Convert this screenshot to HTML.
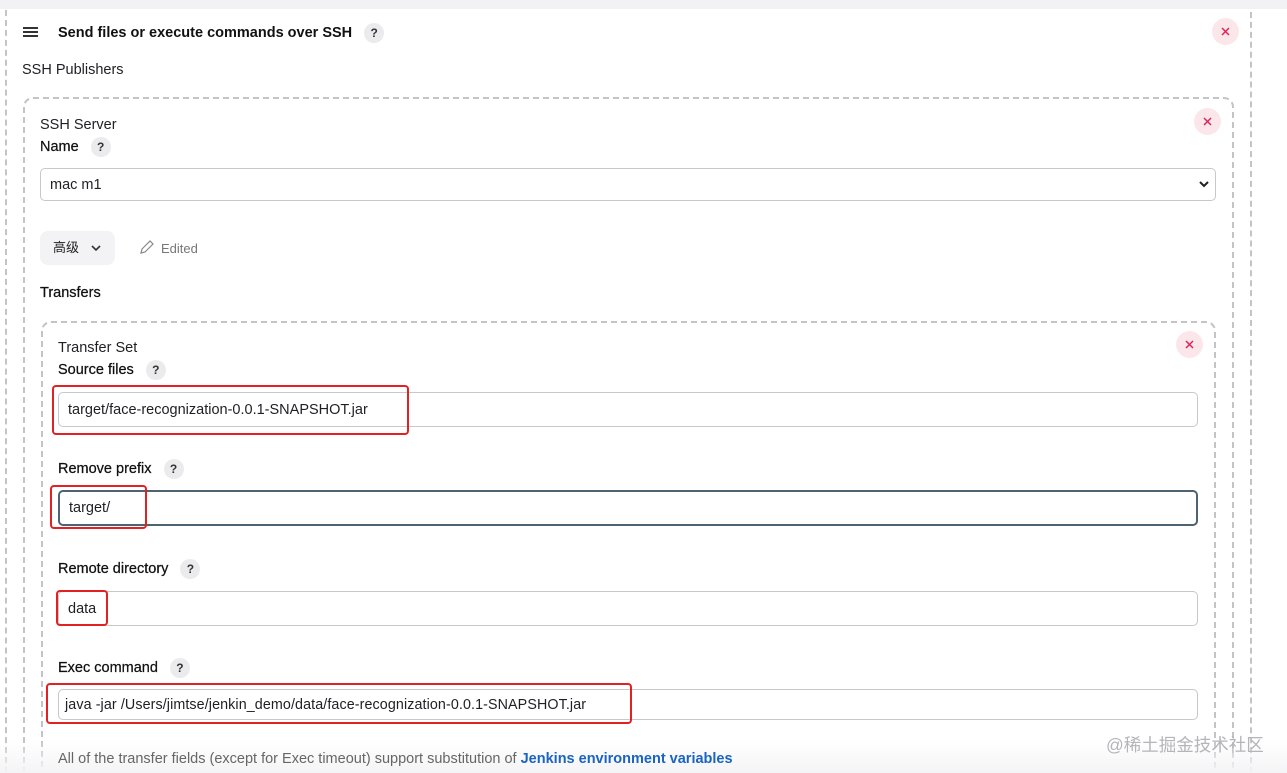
<!DOCTYPE html>
<html><head><meta charset="utf-8"><style>
*{box-sizing:border-box;margin:0;padding:0}
html,body{width:1287px;height:773px;overflow:hidden}
body{background:#fff;font-family:"Liberation Sans","Noto Sans CJK SC",sans-serif;color:#1f1f24}
#w{position:relative;width:1287px;height:773px;overflow:hidden}
.a{position:absolute}
.dash{position:absolute;border:2px dashed #c4c4c8;border-bottom:none;border-radius:10px 10px 0 0}
.lbl{position:absolute;font-size:14.5px;font-weight:normal;color:#111;-webkit-text-stroke:0.25px #111}
.t{position:absolute;font-size:14.5px;color:#1f1f24}
.q{display:inline-block;width:20px;height:20px;border-radius:50%;background:#ebebee;text-align:center;line-height:20px;font-size:12px;font-weight:700;margin-left:8px;color:#333;vertical-align:middle;-webkit-text-stroke:0}
.inp{position:absolute;border:1.5px solid #c8c8cc;border-radius:5px;background:#fff;font-size:14.5px;padding-left:9px;display:flex;align-items:center}
.red{position:absolute;border:2px solid #e22222;border-radius:4px}
.x{position:absolute;width:27px;height:27px;border-radius:50%;background:#fbe7ea}
.x svg{position:absolute;left:9px;top:9px}
</style></head><body><div id="w">
<div class="a" style="left:0;top:0;width:1287px;height:9px;background:#f2f2f5"></div>
<div class="a" style="left:5px;top:10px;width:0;height:763px;border-left:2px dashed #c4c4c8"></div>
<div class="a" style="left:1250px;top:12px;width:0;height:761px;border-left:2px dashed #c4c4c8"></div>
<div class="dash" style="left:23px;top:97px;width:1211px;height:676px"></div>
<div class="dash" style="left:41px;top:321px;width:1175px;height:452px"></div>

<div class="a" style="left:23px;top:27px;width:15px;height:2px;background:#333;box-shadow:0 4px 0 #333,0 8px 0 #333"></div>
<div class="lbl" style="left:58px;top:23px;font-weight:bold;-webkit-text-stroke:0;font-size:14.5px">Send files or execute commands over SSH <span class="q">?</span></div>
<div class="x" style="left:1212px;top:18px"><svg width="9" height="9" viewBox="0 0 9 9"><path d="M1 1l7 7M8 1l-7 7" stroke="#e0245b" stroke-width="1.5"/></svg></div>
<div class="t" style="left:22px;top:62px">SSH Publishers</div>

<div class="t" style="left:40px;top:117px">SSH Server</div>
<div class="lbl" style="left:40px;top:137px">Name <span class="q">?</span></div>
<div class="x" style="left:1194px;top:108px"><svg width="9" height="9" viewBox="0 0 9 9"><path d="M1 1l7 7M8 1l-7 7" stroke="#e0245b" stroke-width="1.5"/></svg></div>
<div class="inp" style="left:40px;top:168px;width:1176px;height:33px">mac m1
<svg class="a" style="right:6px;top:12px" width="10" height="7" viewBox="0 0 10 7"><path d="M1 1l4 4 4-4" stroke="#222" stroke-width="2" fill="none"/></svg></div>

<div class="a" style="left:40px;top:231px;width:75px;height:34px;background:#f3f3f6;border-radius:8px;font-size:13px;line-height:34px;padding-left:13px">高级 <svg style="margin-left:8px" width="10" height="7" viewBox="0 0 10 7"><path d="M1 1l4 4 4-4" stroke="#333" stroke-width="1.6" fill="none"/></svg></div>
<svg class="a" style="left:139px;top:240px" width="15" height="15" viewBox="0 0 15 15"><path d="M2 13l1-4 8-8 3 3-8 8z" stroke="#888" stroke-width="1.2" fill="none"/></svg>
<div class="t" style="left:161px;top:241px;font-size:13px;color:#777">Edited</div>
<div class="lbl" style="left:40px;top:285px">Transfers</div>

<div class="t" style="left:58px;top:340px">Transfer Set</div>
<div class="lbl" style="left:58px;top:360px">Source files <span class="q">?</span></div>
<div class="x" style="left:1176px;top:331px"><svg width="9" height="9" viewBox="0 0 9 9"><path d="M1 1l7 7M8 1l-7 7" stroke="#e0245b" stroke-width="1.5"/></svg></div>
<div class="inp" style="left:58px;top:392px;width:1140px;height:35px">target/face-recognization-0.0.1-SNAPSHOT.jar</div>
<div class="red" style="left:52px;top:385px;width:357px;height:50px"></div>

<div class="lbl" style="left:58px;top:459px">Remove prefix <span class="q">?</span></div>
<div class="inp" style="left:58px;top:490px;width:1140px;height:36px;border:2px solid #4e6371">target/</div>
<div class="red" style="left:50px;top:485px;width:97px;height:44px"></div>

<div class="lbl" style="left:58px;top:559px">Remote directory <span class="q">?</span></div>
<div class="inp" style="left:58px;top:591px;width:1140px;height:35px">data</div>
<div class="red" style="left:56px;top:590px;width:52px;height:36px"></div>

<div class="lbl" style="left:58px;top:658px">Exec command <span class="q">?</span></div>
<div class="inp" style="left:58px;top:689px;width:1140px;height:31px;font-size:14.3px;padding-left:6px;letter-spacing:0.1px">java -jar /Users/jimtse/jenkin_demo/data/face-recognization-0.0.1-SNAPSHOT.jar</div>
<div class="red" style="left:46px;top:683px;width:586px;height:41px"></div>

<div class="a" style="left:0;top:740px;width:1287px;height:33px;background:linear-gradient(#fff0,#f4f4f6)"></div>
<div class="t" style="left:58px;top:751px;color:#666;font-size:14.5px">All of the transfer fields (except for Exec timeout) support substitution of <span style="color:#1964c0;font-weight:600">Jenkins environment variables</span></div>
<div class="t" style="left:1106px;top:732px;font-size:17.5px;color:#b5b5b8">@稀土掘金技术社区</div>
</div></body></html>
